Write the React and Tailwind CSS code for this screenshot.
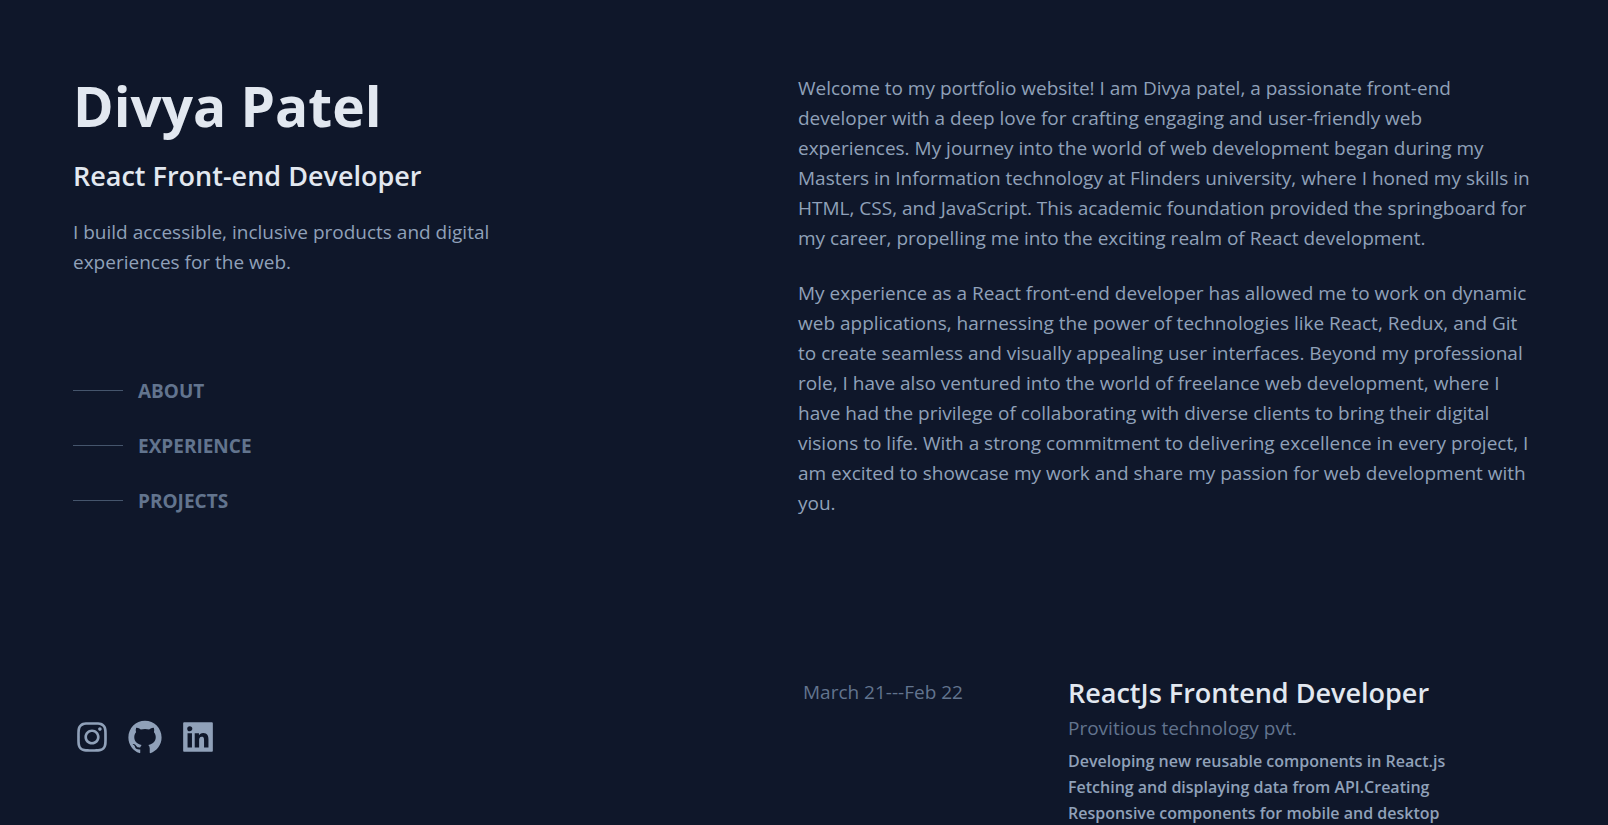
import { AiOutlineInstagram, AiFillGithub, AiFillLinkedin } from "react-icons/ai";

const sections = ["About", "Experience", "Projects"];

const socials = [
  { label: "Instagram", href: "https://instagram.com", Icon: AiOutlineInstagram },
  { label: "GitHub", href: "https://github.com", Icon: AiFillGithub },
  { label: "LinkedIn", href: "https://linkedin.com", Icon: AiFillLinkedin },
];

const duties = [
  "Developing new reusable components in React.js",
  "Fetching and displaying data from API.Creating",
  "Responsive components for mobile and desktop",
];

function Intro() {
  return (
    <header className="flex h-screen flex-col justify-between pt-[76px] pb-[69px]">
      <div>
        <h1 className="text-[55px] leading-[60px] font-bold text-slate-200">Divya Patel</h1>
        <h2 className="mt-[22px] text-[27px] leading-[35px] font-semibold text-slate-200">React Front-end Developer</h2>
        <p className="mt-6 max-w-[430px]">I build accessible, inclusive products and digital experiences for the web.</p>
        <nav aria-label="Sections" className="mt-[86px]">
          <ul>
            {sections.map((name) => (
              <li key={name}>
                <a href={`#${name.toLowerCase()}`} className="flex h-[55px] items-center gap-[15px] font-bold text-slate-500 uppercase">
                  <span className="h-px w-[50px] bg-slate-600" />
                  {name}
                </a>
              </li>
            ))}
          </ul>
        </nav>
      </div>
      <ul className="flex gap-[15px]">
        {socials.map(({ label, href, Icon }) => (
          <li key={label}>
            <a href={href} aria-label={label}>
              <Icon className="size-[38px]" />
            </a>
          </li>
        ))}
      </ul>
    </header>
  );
}

export default function App() {
  return (
    <div className="h-screen overflow-hidden bg-[#0f172a] px-[73px] font-['Open_Sans',sans-serif] text-[19px] leading-[30px] text-slate-400">
      <div className="grid grid-cols-[725fr_737fr]">
        <Intro />
        <main className="pt-[73px]">
          <section id="about" className="space-y-[25px]">
            <p>
              Welcome to my portfolio website! I am Divya patel, a passionate front-end developer with a deep love for
              crafting engaging and user-friendly web experiences. My journey into the world of web development began
              during my Masters in Information technology at Flinders university, where I honed my skills in HTML, CSS,
              and JavaScript. This academic foundation provided the springboard for my career, propelling me into the
              exciting realm of React development.
            </p>
            <p>
              My experience as a React front-end developer has allowed me to work on dynamic web applications,
              harnessing the power of technologies like React, Redux, and Git to create seamless and visually appealing
              user interfaces. Beyond my professional role, I have also ventured into the world of freelance web
              development, where I have had the privilege of collaborating with diverse clients to bring their digital
              visions to life. With a strong commitment to delivering excellence in every project, I am excited to
              showcase my work and share my passion for web development with you.
            </p>
          </section>
          <section id="experience" className="mt-[157px] flex">
            <p className="w-[270px] shrink-0 pt-0.5 pl-[5px] text-slate-500">March 21---Feb 22</p>
            <div>
              <h3 className="text-[27px] leading-[35px] font-semibold text-slate-200">ReactJs Frontend Developer</h3>
              <p className="mt-[3px] text-slate-500">Provitious technology pvt.</p>
              <ul className="mt-[5px] text-[16px] leading-[26px] font-semibold">
                {duties.map((duty) => (
                  <li key={duty}>{duty}</li>
                ))}
              </ul>
            </div>
          </section>
        </main>
      </div>
    </div>
  );
}
